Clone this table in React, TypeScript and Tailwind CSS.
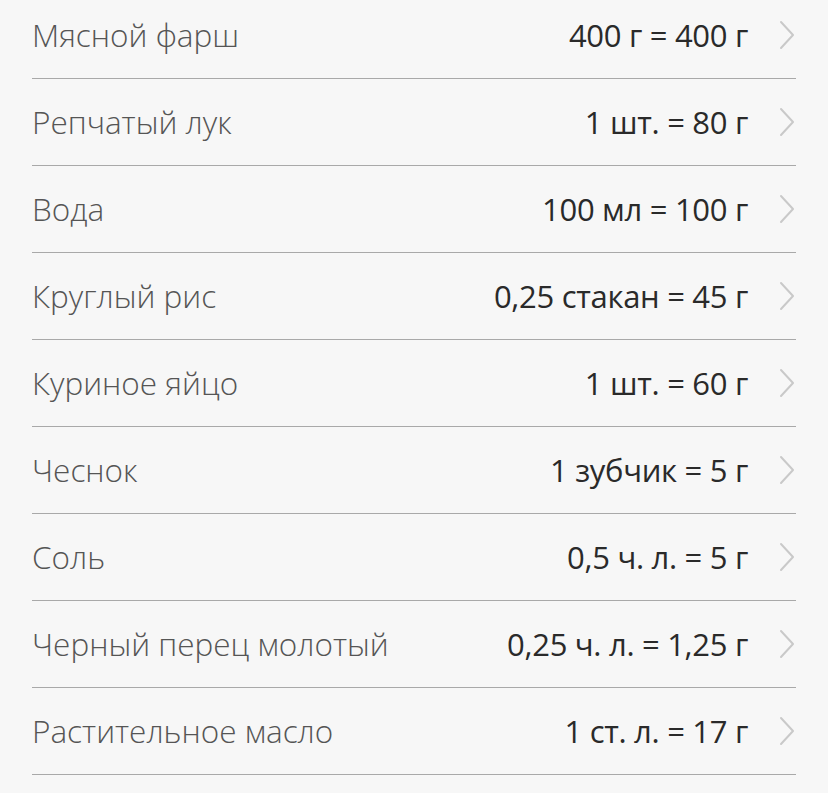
const items: Array<{ name: string; amount: string }> = [
  { name: 'Мясной фарш', amount: '400 г = 400 г' },
  { name: 'Репчатый лук', amount: '1 шт. = 80 г' },
  { name: 'Вода', amount: '100 мл = 100 г' },
  { name: 'Круглый рис', amount: '0,25 стакан = 45 г' },
  { name: 'Куриное яйцо', amount: '1 шт. = 60 г' },
  { name: 'Чеснок', amount: '1 зубчик = 5 г' },
  { name: 'Соль', amount: '0,5 ч. л. = 5 г' },
  { name: 'Черный перец молотый', amount: '0,25 ч. л. = 1,25 г' },
  { name: 'Растительное масло', amount: '1 ст. л. = 17 г' },
]

function Chevron() {
  return (
    <svg width="18" height="30" viewBox="0 0 18 30" fill="none" className="shrink-0">
      <path d="M3 2 L15 15 L3 28" stroke="#c9c9c9" strokeWidth="2" strokeLinecap="round" strokeLinejoin="round" />
    </svg>
  )
}

export default function App() {
  return (
    <div className="h-[793px] w-full overflow-hidden bg-[#f7f7f7] font-['Open_Sans',sans-serif]">
      <ul className="-mt-[8px] pl-[32px] pr-[32px]">
        {items.map(item => (
          <li
            key={item.name}
            className="flex h-[87px] items-center border-b border-[#a9a9a9]"
          >
            <span className="flex-1 text-[31.5px] font-light text-[#555555]">{item.name}</span>
            <span className="text-[31px] font-normal tracking-[-0.3px] text-[#2a2a2a]">{item.amount}</span>
            <span className="ml-[30px] flex w-[18px] justify-end">
              <Chevron />
            </span>
          </li>
        ))}
      </ul>
    </div>
  )
}
